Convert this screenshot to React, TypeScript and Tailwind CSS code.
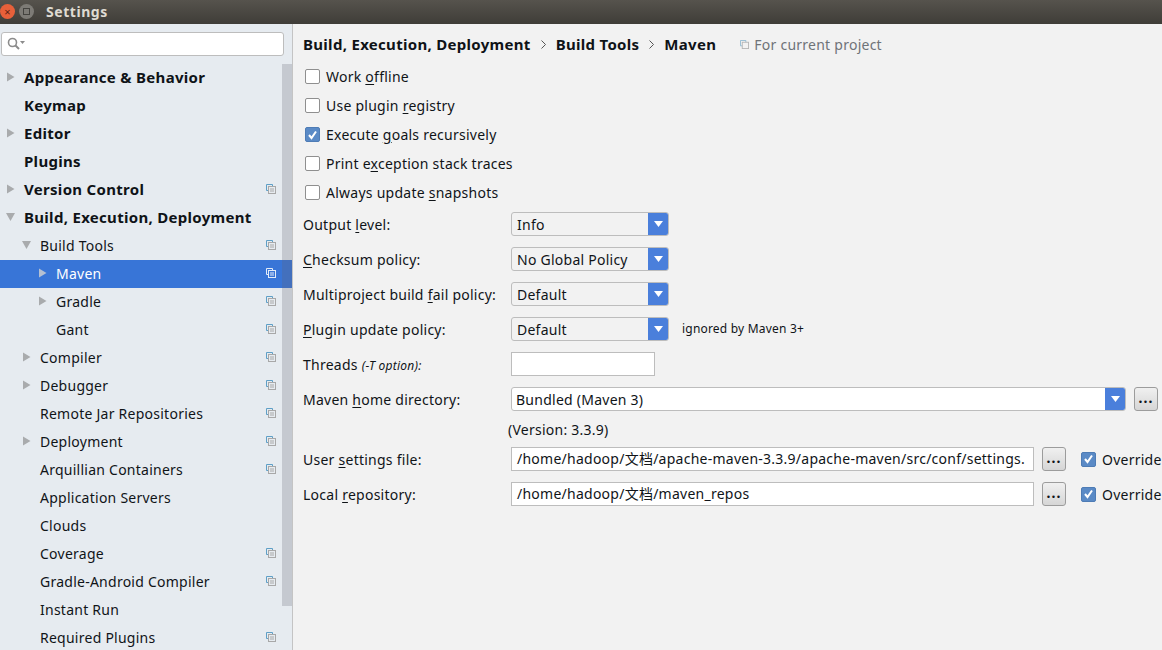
const font = { fontFamily: '"Noto Sans", "Noto Sans CJK SC", sans-serif' };

const ProjectIcon = ({ light = false }: { light?: boolean }) => (
  <svg width="10" height="10" viewBox="0 0 10 10" fill="none" className="shrink-0">
    <path d="M2.5 6.5H.5V.5H6.5V2.5" stroke={light ? '#e4edf9' : '#5f9fc6'} />
    <rect x="2.5" y="2.5" width="7" height="7" stroke={light ? '#e4edf9' : '#a8a8a8'} />
    <path d="M4 5H8M4 7H8" stroke={light ? '#e4edf9' : '#a8a8a8'} />
  </svg>
);

const Arrow = ({ open = false, light = false }: { open?: boolean; light?: boolean }) => (
  <svg width="9" height="10" viewBox="0 0 9 10" className="shrink-0">
    {open ? (
      <path d="M0 1H9L4.5 9Z" fill="#a9abad" />
    ) : (
      <path d="M1 .5L8.5 5L1 9.5Z" fill={light ? '#b4c0d2' : '#a9abad'} />
    )}
  </svg>
);

const Chevron = () => (
  <svg width="5" height="9" viewBox="0 0 5 9" fill="none" className="mx-[10px] shrink-0">
    <path d="M.5 .5L4.5 4.5L.5 8.5" stroke="#555" />
  </svg>
);

type Row = { label: string; level: number; arrow?: 'open' | 'closed'; bold?: boolean; icon?: boolean; selected?: boolean };

const rows: Row[] = [
  { label: 'Appearance & Behavior', level: 0, arrow: 'closed', bold: true },
  { label: 'Keymap', level: 0, bold: true },
  { label: 'Editor', level: 0, arrow: 'closed', bold: true },
  { label: 'Plugins', level: 0, bold: true },
  { label: 'Version Control', level: 0, arrow: 'closed', bold: true, icon: true },
  { label: 'Build, Execution, Deployment', level: 0, arrow: 'open', bold: true },
  { label: 'Build Tools', level: 1, arrow: 'open', icon: true },
  { label: 'Maven', level: 2, arrow: 'closed', icon: true, selected: true },
  { label: 'Gradle', level: 2, arrow: 'closed', icon: true },
  { label: 'Gant', level: 2, icon: true },
  { label: 'Compiler', level: 1, arrow: 'closed', icon: true },
  { label: 'Debugger', level: 1, arrow: 'closed', icon: true },
  { label: 'Remote Jar Repositories', level: 1, icon: true },
  { label: 'Deployment', level: 1, arrow: 'closed', icon: true },
  { label: 'Arquillian Containers', level: 1, icon: true },
  { label: 'Application Servers', level: 1 },
  { label: 'Clouds', level: 1 },
  { label: 'Coverage', level: 1, icon: true },
  { label: 'Gradle-Android Compiler', level: 1, icon: true },
  { label: 'Instant Run', level: 1 },
  { label: 'Required Plugins', level: 1, icon: true },
];

const Check = ({ checked = false }: { checked?: boolean }) =>
  checked ? (
    <span className="w-[15px] h-[15px] rounded-[2px] bg-[#5a8ac6] border border-[#4e7cb5] flex items-center justify-center shrink-0">
      <svg width="11" height="10" viewBox="0 0 11 10" fill="none">
        <path d="M2 5L4.5 8L9 1.5" stroke="white" strokeWidth="2" />
      </svg>
    </span>
  ) : (
    <span className="w-[15px] h-[15px] rounded-[2px] bg-white border border-[#8f8f8f] shrink-0" />
  );

const Mn = ({ children }: { children: string }) => <span className="underline underline-offset-2">{children}</span>;

const Caret = () => (
  <span className="w-[20px] self-stretch bg-[#4a7fdb] flex items-center justify-center rounded-r-[2px] shrink-0">
    <svg width="9" height="6" viewBox="0 0 9 6"><path d="M0 0H9L4.5 6Z" fill="white" /></svg>
  </span>
);

const Select = ({ value }: { value: string }) => (
  <div className="w-[158px] h-6 border border-[#bdbdbd] rounded-[3px] bg-[#f2f2f2] flex items-center pl-[5px] justify-between">
    <span>{value}</span>
    <Caret />
  </div>
);

const Browse = () => (
  <div className="w-6 h-6 border border-[#9c9c9c] rounded-[3px] bg-gradient-to-b from-[#f0f0f0] to-[#d6d6d6] flex items-center justify-center leading-none pb-0.5 font-bold tracking-[1px] shrink-0">
    ...
  </div>
);

const FormRow = ({ label, children }: { label: React.ReactNode; children: React.ReactNode }) => (
  <div className="h-6 mb-[11px] flex items-center">
    <div className="w-[208px] shrink-0 whitespace-nowrap">{label}</div>
    {children}
  </div>
);

const PathRow = ({ label, value }: { label: React.ReactNode; value: string }) => (
  <FormRow label={label}>
    <div className="w-[523px] h-6 border border-[#bdbdbd] bg-white pl-[5px] overflow-hidden whitespace-nowrap leading-[22px] shrink-0">
      {value}
    </div>
    <div className="ml-2"><Browse /></div>
    <div className="ml-[15px] flex items-center gap-[6px] shrink-0">
      <Check checked />
      <span>Override</span>
    </div>
  </FormRow>
);

export default function App() {
  return (
    <div style={font} className="w-[1162px] h-[650px] overflow-hidden flex flex-col bg-[#f2f2f2] text-[14px] tracking-[0.25px] text-[#101418]">
      {/* Title bar */}
      <div className="h-6 shrink-0 bg-gradient-to-b from-[#56534d] to-[#3f3d38] flex items-center pb-[2px]">
        <span className="w-[15px] h-[15px] rounded-full bg-[#e7603a] flex items-center justify-center text-[11px] leading-none text-[#5b2113]">×</span>
        <span className="ml-[4px] w-[15px] h-[15px] rounded-full bg-[#7d7b76] flex items-center justify-center">
          <span className="w-[7px] h-[7px] border border-[#44433f]" />
        </span>
        <span className="ml-[12px] text-[#dfdbd2] font-bold text-[14px] tracking-[0.55px]">Settings</span>
      </div>

      <div className="flex-1 flex min-h-0">
        {/* Sidebar */}
        <aside className="relative w-[293px] shrink-0 bg-[#e6ebf0] border-r border-[#c4c4c4] overflow-hidden">
          <div className="pt-2 h-[40px]">
            <div className="ml-[1px] w-[283px] h-6 bg-white border border-[#bdbdbd] rounded-[3px] flex items-center pl-[5px]">
              <svg width="18" height="14" viewBox="0 0 18 14" fill="none">
                <circle cx="5.5" cy="5.5" r="4" stroke="#8b8b8b" strokeWidth="1.6" />
                <path d="M8.5 8.5L12 12" stroke="#8b8b8b" strokeWidth="2" />
                <path d="M13 4H18L15.5 7Z" fill="#8b8b8b" />
              </svg>
            </div>
          </div>
          {rows.map((r) => (
            <div
              key={r.label}
              className={`h-7 flex items-center pr-4 pb-0.5 ${r.selected ? 'bg-[#3875d7] text-white' : ''}`}
            >
              <div
                className={`flex-1 flex items-center min-w-0 ${r.level === 0 ? 'pl-[6px]' : r.level === 1 ? 'pl-[22px]' : 'pl-[38px]'}`}
              >
                <span className="w-[18px] shrink-0 flex items-center">
                  {r.arrow && <Arrow open={r.arrow === 'open'} light={r.selected} />}
                </span>
                <span className={`whitespace-nowrap ${r.bold ? 'font-bold text-[15px] tracking-[0.3px] text-[#0f1317]' : ''}`}>{r.label}</span>
              </div>
              {r.icon && <ProjectIcon light={r.selected} />}
            </div>
          ))}
          {/* scrollbar */}
          <div className="absolute right-0 top-[40px] w-[10px] h-[542px] bg-[#63636e]/25" />
        </aside>

        {/* Main panel */}
        <main className="flex-1 min-w-0 pl-[10px] overflow-hidden">
          <div className="h-[38px] pt-[2px] flex items-center whitespace-nowrap">
            <span className="font-bold text-[15px] tracking-[0.3px] text-[#0f1317]">Build, Execution, Deployment</span>
            <Chevron />
            <span className="font-bold text-[15px] tracking-[0.3px] text-[#0f1317]">Build Tools</span>
            <Chevron />
            <span className="font-bold text-[15px] tracking-[0.3px] text-[#0f1317]">Maven</span>
            <span className="ml-6 flex items-center gap-[5px] text-[#6f7378]">
              <svg width="9" height="9" viewBox="0 0 10 10" fill="none">
                <path d="M2.5 6.5H.5V.5H6.5V2.5" stroke="#8db7cf" />
                <rect x="2.5" y="2.5" width="7" height="7" stroke="#b5b5b5" />
              </svg>
              For current project
            </span>
          </div>

          <div>
            {[
              [<>Work <Mn>o</Mn>ffline</>, false],
              [<>Use plugin <Mn>r</Mn>egistry</>, false],
              [<>Execute <Mn>g</Mn>oals recursively</>, true],
              [<>Print e<Mn>x</Mn>ception stack traces</>, false],
              [<>Always update <Mn>s</Mn>napshots</>, false],
            ].map(([label, checked], i) => (
              <div key={i} className="h-[29px] flex items-center gap-[6px] pl-[2px]">
                <Check checked={checked as boolean} />
                <span>{label}</span>
              </div>
            ))}
          </div>

          <div className="pt-[5px]">
            <FormRow label={<>Output <Mn>l</Mn>evel:</>}><Select value="Info" /></FormRow>
            <FormRow label={<><Mn>C</Mn>hecksum policy:</>}><Select value="No Global Policy" /></FormRow>
            <FormRow label={<>Multiproject build <Mn>f</Mn>ail policy:</>}><Select value="Default" /></FormRow>
            <FormRow label={<><Mn>P</Mn>lugin update policy:</>}>
              <Select value="Default" />
              <span className="ml-[13px] text-[12px] tracking-[0.2px]">ignored by Maven 3+</span>
            </FormRow>
            <FormRow label={<>Threads <i className="text-[12px]">(-T option):</i></>}>
              <div className="w-[144px] h-6 border border-[#bdbdbd] bg-white" />
            </FormRow>
            <FormRow label={<>Maven <Mn>h</Mn>ome directory:</>}>
              <div className="w-[615px] h-6 border border-[#bdbdbd] rounded-[3px] bg-white flex items-center justify-between pl-1">
                <span>Bundled (Maven 3)</span>
                <Caret />
              </div>
              <div className="ml-2"><Browse /></div>
            </FormRow>
            <div className="h-6 -mt-[5px] mb-[6px] pl-[205px] flex items-center">(Version: 3.3.9)</div>
            <PathRow label={<>User <Mn>s</Mn>ettings file:</>} value="/home/hadoop/文档/apache-maven-3.3.9/apache-maven/src/conf/settings." />
            <PathRow label={<>Local <Mn>r</Mn>epository:</>} value="/home/hadoop/文档/maven_repos" />
          </div>
        </main>
      </div>
    </div>
  );
}
